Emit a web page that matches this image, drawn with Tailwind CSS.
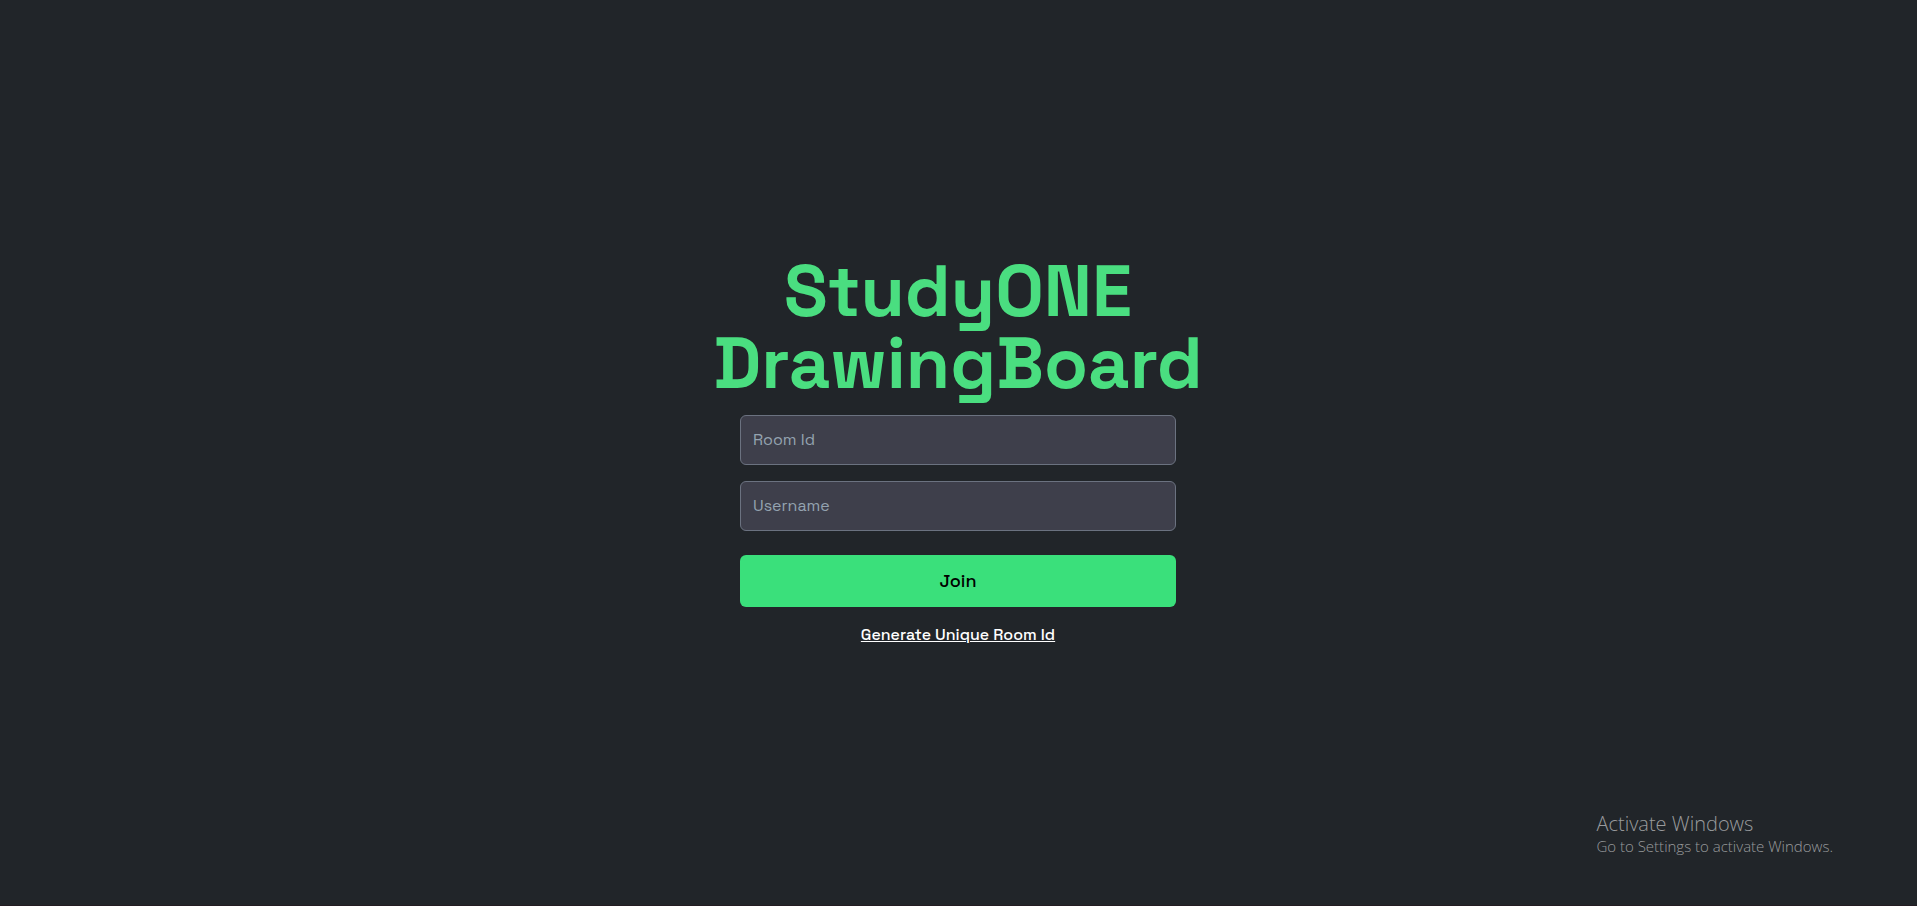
<!DOCTYPE html>
<html lang="en">
<head>
<meta charset="utf-8">
<meta name="viewport" content="width=device-width, initial-scale=1">
<title>StudyONE DrawingBoard</title>
<script src="https://cdn.jsdelivr.net/npm/@tailwindcss/browser@4"></script>
</head>
<body class="min-h-screen bg-[#212529] font-['Space_Grotesk','Inter',sans-serif]">
<main class="flex min-h-screen flex-col items-center justify-center border-b border-[#231c22] pr-px pb-1">
  <h1 class="mb-4 text-center text-7xl leading-none font-bold text-[#4ade80]">StudyONE<br>DrawingBoard</h1>
  <form class="flex w-full max-w-[436px] flex-col">
    <input type="text" aria-label="Room Id" placeholder="Room Id" class="mb-4 h-[50px] rounded-md border border-[#6b7280] bg-[#3e3f4b] px-3 pb-px text-base text-white placeholder:text-[#94a3b0]">
    <input type="text" aria-label="Username" placeholder="Username" class="mb-6 h-[50px] rounded-md border border-[#6b7280] bg-[#3e3f4b] px-3 pb-px text-base text-white placeholder:text-[#94a3b0]">
    <button type="submit" class="mb-4 h-[52px] rounded-md bg-[#3ae07b] text-lg font-medium text-black">Join</button>
    <a href="#" class="self-center text-base leading-6 font-medium text-white underline">Generate Unique Room Id</a>
  </form>
</main>
<aside class="absolute right-[84px] bottom-[50px] font-['Segoe_UI','Open_Sans',sans-serif] text-[#999b9d]">
  <p class="text-xl leading-6 font-light">Activate Windows</p>
  <p class="text-[15px] leading-5 font-light">Go to Settings to activate Windows.</p>
</aside>
</body>
</html>
